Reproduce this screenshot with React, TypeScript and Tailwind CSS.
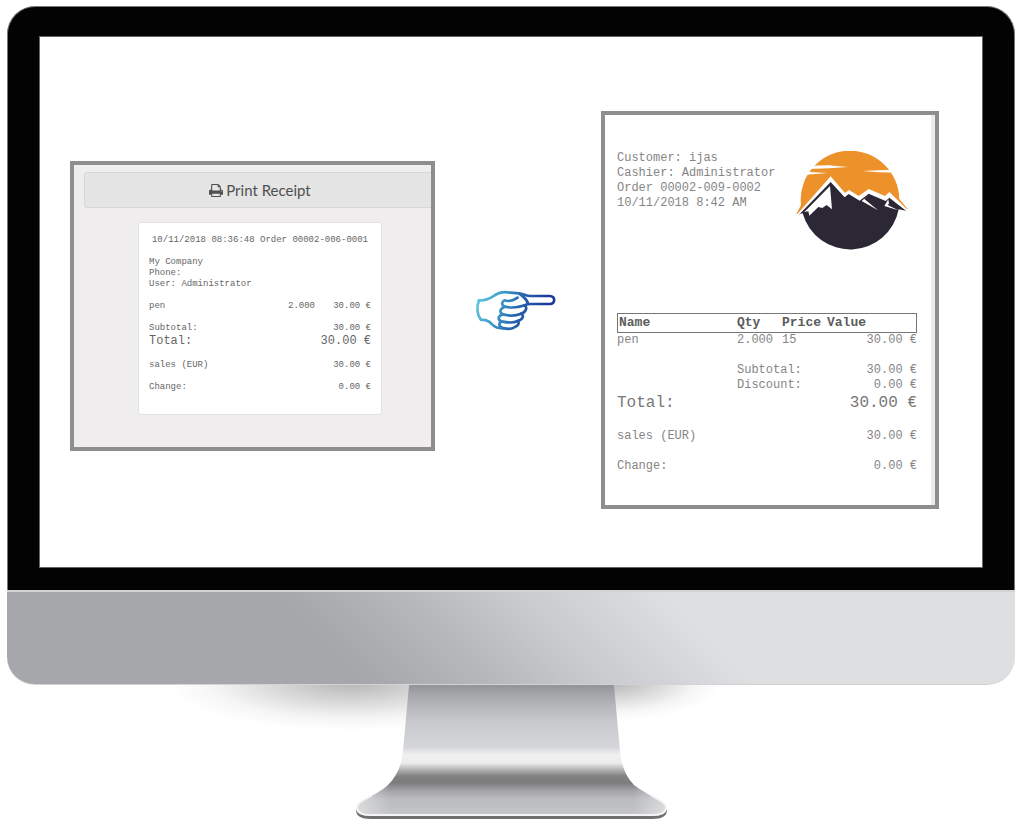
import type { ReactNode } from "react";

function PrinterIcon() {
  return (
    <svg viewBox="0 0 1664 1536" className="h-[13px] w-[14px]" fill="currentColor" aria-hidden="true">
      <path
        transform="translate(0 1408) scale(1 -1)"
        d="M384 0h896v256h-896v-256zM384 640h896v384h-160q-40 0 -68 28t-28 68v160h-640v-640zM1536 576q0 26 -19 45t-45 19t-45 -19t-19 -45t19 -45t45 -19t45 19t19 45zM1664 576v-416q0 -13 -9.5 -22.5t-22.5 -9.5h-224v-160q0 -40 -28 -68t-68 -28h-960q-40 0 -68 28t-28 68v160h-224q-13 0 -22.5 9.5t-9.5 22.5v416q0 79 56.5 135.5t135.5 56.5h64v544q0 40 28 68t68 28h672q40 0 88 -20t76 -48l152 -152q28 -28 48 -76t20 -88v-256h64q79 0 135.5 -56.5t56.5 -135.5z"
      />
    </svg>
  );
}

function PointingHand() {
  return (
    <svg viewBox="48 58 246 126" className="mr-1 h-[42px] w-[82px] shrink-0" fill="none" aria-hidden="true">
      <defs>
        <linearGradient id="hand" x1="55" y1="80" x2="240" y2="150" gradientUnits="userSpaceOnUse">
          <stop offset="0" stopColor="#63c8dc" />
          <stop offset="0.35" stopColor="#3a9cc8" />
          <stop offset="0.65" stopColor="#2663b0" />
          <stop offset="1" stopColor="#1c3a98" />
        </linearGradient>
      </defs>
      <g stroke="url(#hand)" strokeWidth="8" strokeLinejoin="round" strokeLinecap="round">
        <path d="M60 92 C78 93 90 88 102 80 C116 70 130 66 146 68 L180 71 C194 73 202 79 214 79 L272 79 C290 80 290 102 272 103 L207 103" />
        <path d="M60 92 C52 112 54 136 66 151 C80 149 90 154 98 163 C106 173 120 177 140 177" />
        <path d="M180 71 C194 82 206 90 207 103" />
        <path d="M176 84 C164 92 152 98 136 92 C126 98 128 108 138 111 C158 116 184 112 207 103" />
        <path d="M138 111 C122 116 120 129 132 134 C152 139 172 138 184 133 C202 128 206 112 196 107" />
        <path d="M132 134 C116 138 115 151 128 155 C148 160 166 159 176 154 C192 150 196 138 186 132" />
        <path d="M128 155 C118 160 118 171 132 175 C146 179 158 178 166 173 C178 169 182 160 176 154" />
      </g>
    </svg>
  );
}

function MountainLogo() {
  return (
    <svg viewBox="48 28 342 300" className="h-[100px] w-[114px] shrink-0" role="img" aria-label="Mountain logo">
      <path fill="#ed922b" d="M52 218 L66 190 L65 178 A148 148 0 0 1 361 172 L386 202 Z" />
      <path fill="#fff" d="M92 72 L150 71 L206 76 L150 80 L86 82 Z M78 90 L146 94 L72 100 Z M250 88 L300 86 L350 84 L352 93 L300 92 Z" />
      <path fill="#fff" d="M48 225 L155 104 L198 154 L210 145 L239 163 L269 142 L318 163 L331 151 L390 209 L360 216 L213 230 L74 228 Z" />
      <path
        fill="#2c2735"
        d="M56 223 L155 121 L197 167 L209 157 L242 177 L269 156 L320 178 L331 168 L350 183 L381 207 L359 203 A148 148 0 0 1 71 215 L64 216 Z"
      />
      <path fill="#fff" d="M153 133 L159 203 L143 190 L130 199 L118 196 L91 222 L88 209 L76 211 Z" />
      <path fill="#fff" d="M269 160 L256 172 L297 206 L248 178 Z M328 173 L330 186 L326 190 L358 206 L316 193 Z" />
    </svg>
  );
}

function Line({ left, right }: { left: ReactNode; right: ReactNode }) {
  return (
    <div className="flex justify-between">
      <span>{left}</span>
      <span>{right}</span>
    </div>
  );
}

function ReceiptBefore() {
  return (
    <section className="mb-2 h-[290px] w-[365px] shrink-0 overflow-hidden border-4 border-[#8e8e8e] bg-[#efeded] pt-[7px] pl-[10px]">
      <div className="-mr-[5px] flex flex-col items-center">
        <button
          type="button"
          className="flex h-9 w-full items-center justify-center gap-[3px] rounded-[3px] border border-[#d6d8d8] bg-[#e5e5e5] font-['Lato',sans-serif] text-[15px] leading-5 text-[#4f4f4f]"
        >
          <PrinterIcon />
          Print Receipt
        </button>
        <div className="mt-[14px] flex w-[244px] flex-col gap-[11px] rounded-[3px] border border-[#e2e2e2] bg-white px-[10px] pt-3 pb-[21px] font-['Liberation_Mono',monospace] text-[9px] leading-[11px] text-[#666]">
          <p className="text-center">10/11/2018 08:36:48 Order 00002-006-0001</p>
          <div>
            <p>My Company</p>
            <p>Phone:</p>
            <p>User: Administrator</p>
          </div>
          <div className="flex">
            <span className="grow">pen</span>
            <span>2.000</span>
            <span className="w-14 text-right">30.00 €</span>
          </div>
          <div>
            <Line left="Subtotal:" right="30.00 €" />
            <div className="text-[12px] leading-[15px]">
              <Line left="Total:" right="30.00 €" />
            </div>
          </div>
          <Line left="sales (EUR)" right="30.00 €" />
          <Line left="Change:" right="0.00 €" />
        </div>
      </div>
    </section>
  );
}

function ReceiptAfter() {
  return (
    <section className="h-[398px] w-[338px] shrink-0 border-4 border-[#8e8e8e] bg-white font-['Liberation_Mono',monospace] text-[12px] leading-[15px] text-[#858585]">
      <div className="h-full border-r-4 border-[#ececec] pt-9 pr-[14px] pl-3">
        <header className="flex h-[162px] items-start justify-between pr-2">
          <div>
            <p>Customer: ijas</p>
            <p>Cashier: Administrator</p>
            <p>Order 00002-009-0002</p>
            <p>10/11/2018 8:42 AM</p>
          </div>
          <MountainLogo />
        </header>
        <table className="w-full table-fixed border-separate border-spacing-0">
          <colgroup>
            <col className="w-[120px]" />
            <col className="w-[45px]" />
            <col className="w-[45px]" />
            <col />
          </colgroup>
          <thead>
            <tr className="text-left text-[13px] leading-[18px] text-[#5c5c5c]">
              <th className="border-y border-l border-[#777] pl-px">Name</th>
              <th className="border-y border-[#777]">Qty</th>
              <th className="border-y border-[#777]">Price</th>
              <th className="border-y border-r border-[#777]">Value</th>
            </tr>
          </thead>
          <tbody>
            <tr>
              <td>pen</td>
              <td>2.000</td>
              <td>15</td>
              <td className="text-right">30.00 €</td>
            </tr>
            <tr>
              <td />
              <td colSpan={2} className="pt-[15px]">Subtotal:</td>
              <td className="pt-[15px] text-right">30.00 €</td>
            </tr>
            <tr>
              <td />
              <td colSpan={2}>Discount:</td>
              <td className="text-right">0.00 €</td>
            </tr>
            <tr className="text-[16px] leading-[21px] text-[#777]">
              <td colSpan={3}>Total:</td>
              <td className="text-right">30.00 €</td>
            </tr>
            <tr>
              <td colSpan={3} className="pt-[15px]">sales (EUR)</td>
              <td className="pt-[15px] text-right">30.00 €</td>
            </tr>
            <tr>
              <td colSpan={3} className="pt-[15px]">Change:</td>
              <td className="pt-[15px] text-right">0.00 €</td>
            </tr>
          </tbody>
        </table>
      </div>
    </section>
  );
}

function Stand() {
  return (
    <svg viewBox="0 0 680 141" className="h-[141px] w-[680px]" aria-hidden="true">
      <defs>
        <linearGradient id="metal" x1="0" y1="0" x2="0" y2="132" gradientUnits="userSpaceOnUse">
          <stop offset="0" stopColor="#929397" />
          <stop offset="0.05" stopColor="#a0a1a5" />
          <stop offset="0.16" stopColor="#b6b7bb" />
          <stop offset="0.28" stopColor="#c8c9cd" />
          <stop offset="0.47" stopColor="#d5d6d9" />
          <stop offset="0.53" stopColor="#f0f0f0" />
          <stop offset="0.59" stopColor="#ededed" />
          <stop offset="0.64" stopColor="#b4b4b4" />
          <stop offset="0.69" stopColor="#828283" />
          <stop offset="0.74" stopColor="#7c7c7e" />
          <stop offset="0.8" stopColor="#a3a3a6" />
          <stop offset="0.86" stopColor="#babbbf" />
          <stop offset="1" stopColor="#c6c7cb" />
        </linearGradient>
        <linearGradient id="footGlow" x1="185" y1="0" x2="496" y2="0" gradientUnits="userSpaceOnUse">
          <stop offset="0" stopColor="#fff" stopOpacity="0.45" />
          <stop offset="0.11" stopColor="#fff" stopOpacity="0" />
          <stop offset="0.89" stopColor="#fff" stopOpacity="0" />
          <stop offset="1" stopColor="#fff" stopOpacity="0.45" />
        </linearGradient>
        <radialGradient id="shade">
          <stop offset="0" stopColor="#000" stopOpacity="0.3" />
          <stop offset="0.4" stopColor="#000" stopOpacity="0.16" />
          <stop offset="0.75" stopColor="#000" stopOpacity="0.04" />
          <stop offset="1" stopColor="#000" stopOpacity="0" />
        </radialGradient>
      </defs>
      <ellipse cx="180" cy="-4" rx="185" ry="50" fill="url(#shade)" />
      <ellipse cx="440" cy="-4" rx="112" ry="40" fill="url(#shade)" />
      <path d="M185 125 Q185 134 200 134 H481 Q496 134 496 125 Z" fill="#6f6f70" />
      <path
        d="M238 0 L232 66 Q230 88 216 101 Q209 107 191 116 Q185 119 185 124 Q186 131 199 131 H482 Q495 131 496 124 Q496 119 490 116 Q472 107 463 100 Q451 88 449 66 L443 0 Z"
        fill="url(#metal)"
      />
      <path
        d="M216 101 Q209 107 191 116 Q185 119 185 124 Q186 131 199 131 H482 Q495 131 496 124 Q496 119 490 116 Q472 107 463 100 Z"
        fill="url(#footGlow)"
      />
      <path
        d="M200 111 L191 116 Q185 120 186 124 Q188 130 199 130 H482 Q493 130 495 124 Q496 120 490 116 L481 111"
        fill="none"
        stroke="#f4f4f4"
        strokeWidth="2"
        strokeLinecap="round"
      />
    </svg>
  );
}

export default function App() {
  return (
    <main className="overflow-hidden bg-white pt-[6px] pr-[9px] pl-[7px]">
      <div className="rounded-t-[28px] border-x border-t border-[#777] bg-[#030303] px-[31px] pt-[29px] pb-[22px]">
        <div className="flex items-center justify-between border border-[#666] bg-white pt-[74px] pr-[43px] pb-[58px] pl-[30px]">
          <ReceiptBefore />
          <PointingHand />
          <ReceiptAfter />
        </div>
      </div>
      <div className="h-[95px] rounded-b-[28px] border-t-2 border-b border-[#d2d3d5] bg-[linear-gradient(45deg,#a6a7ab_33%,#b6b7bb_44%,#c9cace_54%,#dddfe1_68%)]" />
      <div className="flex justify-center">
        <Stand />
      </div>
    </main>
  );
}
